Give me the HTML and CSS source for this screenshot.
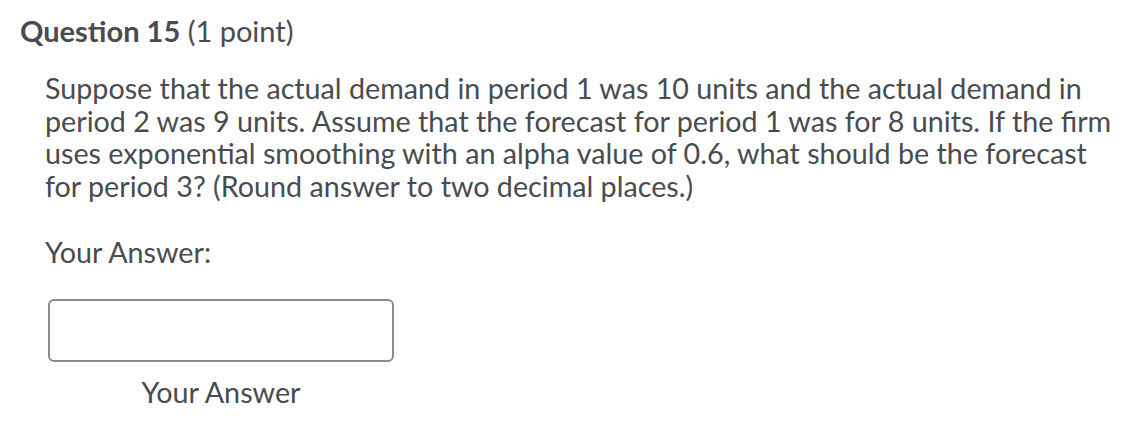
FILE: index.html
```html
<!DOCTYPE html>
<html>
<head>
<meta charset="utf-8">
<link rel="stylesheet" href="styles.css">
</head>
<body>
<div class="question">
  <h2 class="q-title"><span class="q-num">Question 15</span> <span class="q-pts">(1 point)</span></h2>
  <div class="q-body">
    <p class="q-text">Suppose that the actual demand in period 1 was 10 units and the actual demand in period 2 was 9 units. Assume that the forecast for period 1 was for 8 units. If the firm uses exponential smoothing with an alpha value of 0.6, what should be the forecast for period 3? (Round answer to two decimal places.)</p>
    <p class="q-label">Your Answer:</p>
    <div class="answer">
      <input class="answer-input" type="text" aria-label="Your Answer">
      <div class="answer-caption">Your Answer</div>
    </div>
  </div>
</div>
</body>
</html>
```
FILE: styles.css
```css
html, body {
  margin: 0;
  padding: 0;
  background: #ffffff;
}
body {
  font-family: Lato, "Open Sans", sans-serif;
  color: #494c4e;
}
.question {
  padding: 13px 20px 0 20px;
}
.q-title {
  margin: 0;
  font-size: 29px;
  line-height: 36px;
  font-weight: 400;
}
.q-num {
  font-weight: 700;
}
.q-body {
  padding-left: 25px;
  padding-top: 23px;
  width: 1078px;
}
.q-text {
  margin: 0;
  font-size: 28.7px;
  line-height: 32.5px;
}
.q-label {
  margin: 34px 0 0 0;
  font-size: 28.7px;
  line-height: 32px;
}
.answer {
  display: flex;
  flex-direction: column;
  align-items: center;
  width: 346px;
  margin-left: 3px;
  margin-top: 31px;
}
.answer-input {
  box-sizing: border-box;
  width: 346px;
  height: 63px;
  border: 2px solid #898c8e;
  border-radius: 6px;
  background: #fff;
  margin: 0;
}
.answer-caption {
  font-size: 28.7px;
  line-height: 32px;
  margin-top: 14px;
}
```
